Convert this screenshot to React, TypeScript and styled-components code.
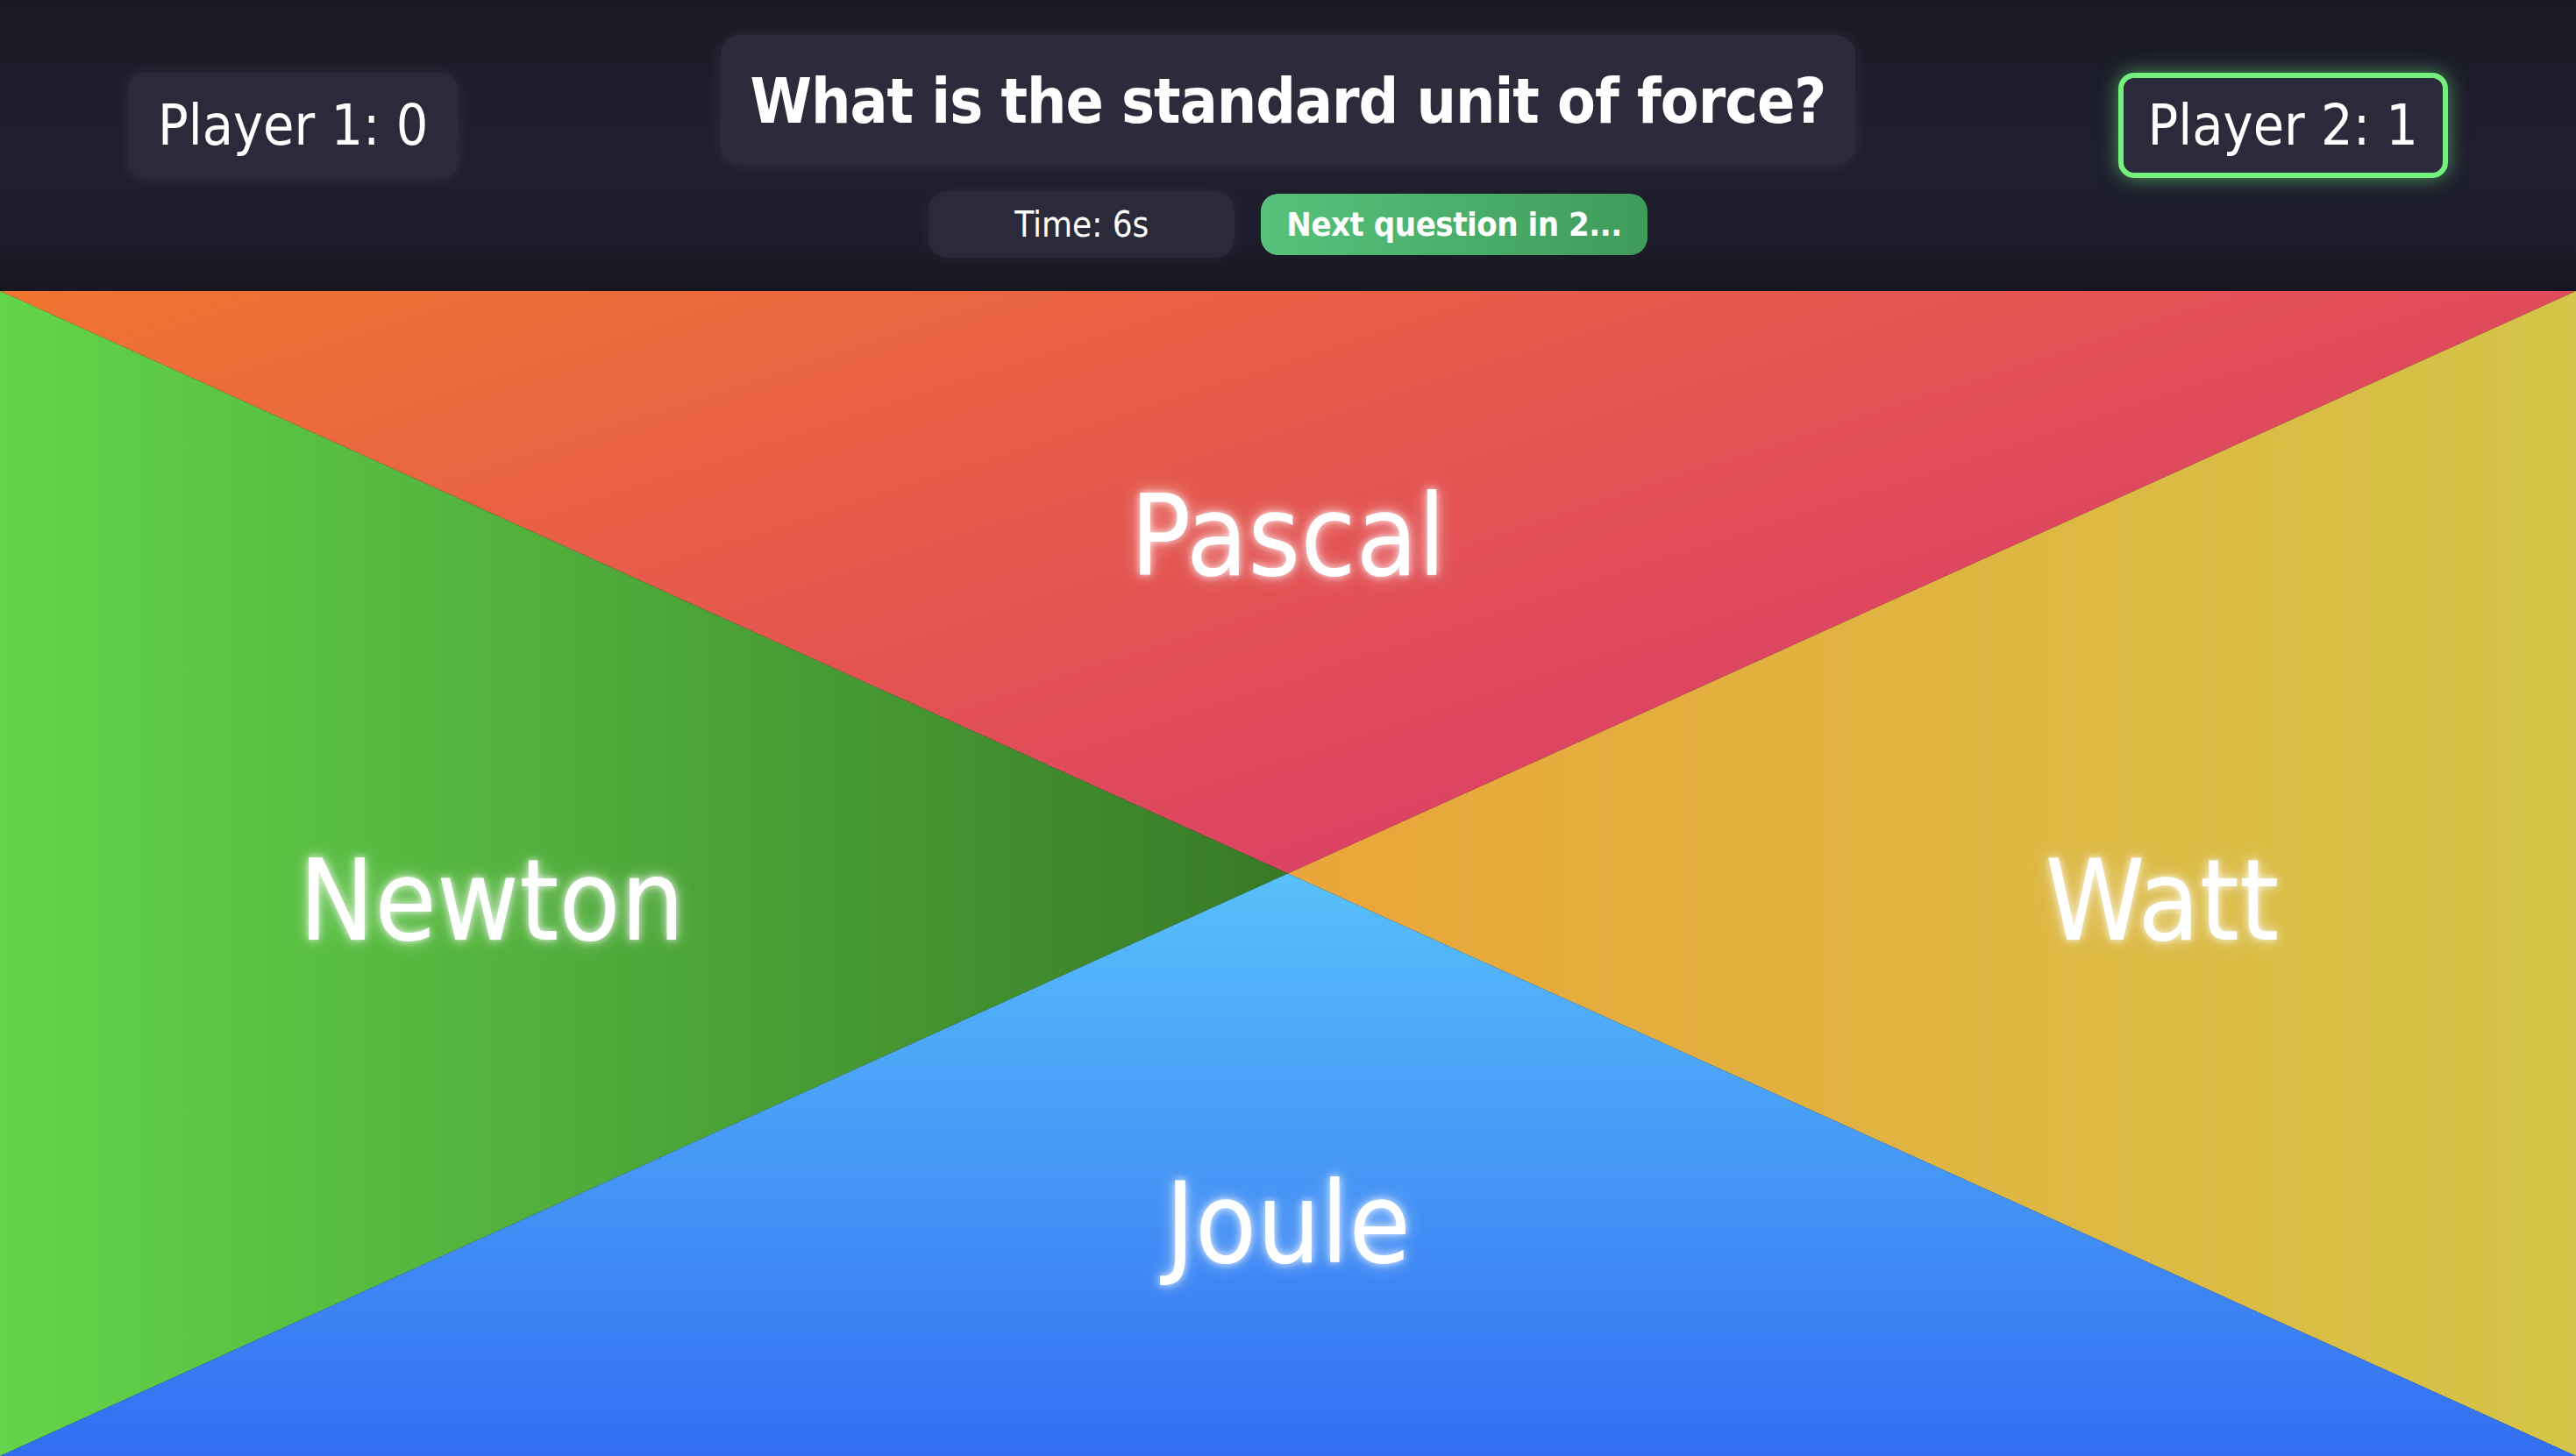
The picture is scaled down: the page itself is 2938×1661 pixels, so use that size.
import styled, { createGlobalStyle, css } from "styled-components";

type Side = "top" | "left" | "right" | "bottom";

const answers: { side: Side; label: string }[] = [
  { side: "top", label: "Pascal" },
  { side: "left", label: "Newton" },
  { side: "right", label: "Watt" },
  { side: "bottom", label: "Joule" },
];

const GlobalStyle = createGlobalStyle`
  html, body {
    margin: 0;
    padding: 0;
    background: #1c1c2a;
  }
  body {
    overflow: hidden;
  }
`;

const App = () => {
  return (
    <>
      <GlobalStyle />
      <Page>
        <Header>
          <PlayerCard>Player 1: 0</PlayerCard>
          <CenterColumn>
            <QuestionCard>What is the standard unit of force?</QuestionCard>
            <StatusRow>
              <TimerPill>Time: 6s</TimerPill>
              <NextBadge>Next question in 2...</NextBadge>
            </StatusRow>
          </CenterColumn>
          <PlayerCard $active>Player 2: 1</PlayerCard>
        </Header>
        <Board>
          {answers.map((a) => (
            <Answer key={a.side} $side={a.side}>
              <AnswerLabel>{a.label}</AnswerLabel>
            </Answer>
          ))}
        </Board>
      </Page>
    </>
  );
};
export default App;

const Page = styled.div`
  display: flex;
  flex-direction: column;
  height: 100vh;
  overflow: hidden;
  color: #fff;
  font-family: "DejaVu Sans Condensed", "DejaVu Sans", sans-serif;
  font-stretch: condensed;
`;

const Header = styled.header`
  display: flex;
  justify-content: space-between;
  align-items: flex-start;
  height: 332px;
  box-sizing: border-box;
  padding: 40px 146px 0;
  background: linear-gradient(
    180deg,
    #1a1a26 0%,
    #1f1f2f 55%,
    #1c1c2a 85%,
    #161620 100%
  );
`;

const PlayerCard = styled.div<{ $active?: boolean }>`
  margin-top: 43px;
  padding: 17px 28px;
  border: 6px solid transparent;
  border-radius: 18px;
  background: #2a2a3a;
  font-size: 64px;
  white-space: nowrap;
  box-shadow: 0 0 18px rgba(255, 255, 255, 0.08);
  ${({ $active }) =>
    $active &&
    css`
      border-color: #74f07c;
      box-shadow: 0 0 22px rgba(116, 240, 124, 0.55);
    `}
`;

const CenterColumn = styled.div`
  display: flex;
  flex-direction: column;
  align-items: center;
  gap: 30px;
`;

const QuestionCard = styled.h1`
  margin: 0;
  padding: 34px 34px 31px;
  border-radius: 22px;
  background: #2b2b3b;
  font-size: 71px;
  font-weight: 700;
  letter-spacing: -1px;
  white-space: nowrap;
  box-shadow: 0 0 20px rgba(255, 255, 255, 0.07);
`;

const StatusRow = styled.div`
  display: flex;
  align-items: center;
  gap: 30px;
`;

const TimerPill = styled.div`
  min-width: 349px;
  box-sizing: border-box;
  padding: 15px 24px;
  border-radius: 22px;
  background: #2a2a3a;
  font-size: 40px;
  text-align: center;
  box-shadow: 0 0 18px rgba(255, 255, 255, 0.05);
`;

const NextBadge = styled.div`
  padding: 13px 29px;
  border-radius: 20px;
  background: linear-gradient(90deg, #57c27b, #3f9b5b);
  font-size: 38px;
  font-weight: 700;
  letter-spacing: -0.5px;
  white-space: nowrap;
`;

const Board = styled.main`
  flex: 1;
  min-height: 0;
  display: grid;
  grid-template-columns: 1fr 1fr;
  grid-template-rows: 1fr 1fr;
`;

const sides = {
  top: css`
    grid-column: 1 / 3;
    grid-row: 1;
    clip-path: polygon(0 0, 100% 0, 50% 100%);
    background: linear-gradient(162deg, #f07530 0%, #d42e78 100%);
    justify-content: center;
    align-items: flex-start;
    padding-top: 216px;
  `,
  bottom: css`
    grid-column: 1 / 3;
    grid-row: 2;
    clip-path: polygon(50% 0, 100% 100%, 0 100%);
    background: linear-gradient(180deg, #58c0fa 0%, #336ef2 100%);
    justify-content: center;
    align-items: flex-end;
    padding-bottom: 201px;
  `,
  left: css`
    grid-column: 1;
    grid-row: 1 / 3;
    clip-path: polygon(0 0, 100% 50%, 0 100%);
    background: linear-gradient(90deg, #63d54a 0%, #387a27 100%);
    justify-content: flex-start;
    align-items: center;
    padding-left: 341px;
    padding-top: 62px;
  `,
  right: css`
    grid-column: 2;
    grid-row: 1 / 3;
    clip-path: polygon(100% 0, 100% 100%, 0 50%);
    background: linear-gradient(90deg, #eaa53b 0%, #d5c449 100%);
    justify-content: flex-end;
    align-items: center;
    padding-right: 339px;
    padding-top: 62px;
  `,
};

const Answer = styled.button<{ $side: Side }>`
  display: flex;
  min-height: 0;
  margin: 0;
  padding: 0;
  border: none;
  color: inherit;
  font: inherit;
  cursor: pointer;
  ${({ $side }) => sides[$side]}
`;

const AnswerLabel = styled.span`
  font-size: 128px;
  line-height: 1;
  white-space: nowrap;
  text-shadow: 0 0 10px rgba(255, 255, 255, 0.85),
    0 0 22px rgba(255, 255, 255, 0.45);
`;
